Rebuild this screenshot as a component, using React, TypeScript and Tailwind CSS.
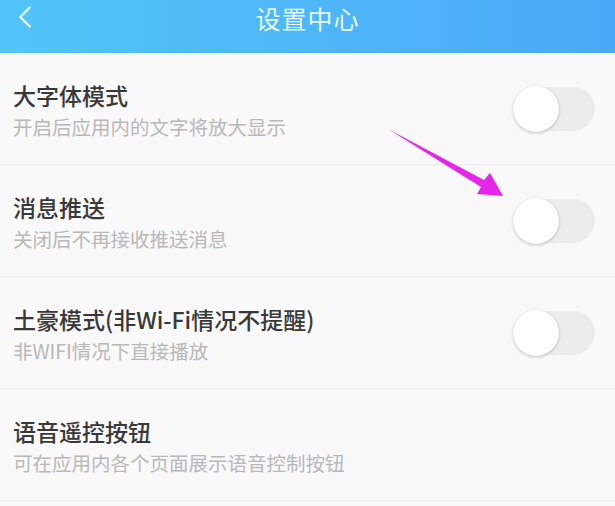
import { ChevronLeft } from "lucide-react";

const settings = [
  { title: "大字体模式", desc: "开启后应用内的文字将放大显示", toggle: true },
  { title: "消息推送", desc: "关闭后不再接收推送消息", toggle: true },
  { title: "土豪模式(非Wi-Fi情况不提醒)", desc: "非WIFI情况下直接播放", toggle: true },
  { title: "语音遥控按钮", desc: "可在应用内各个页面展示语音控制按钮", toggle: false },
];

const Toggle = () => (
  <div className="relative w-[82px] h-[44px] rounded-full bg-[#ececec]">
    <div className="absolute left-0 top-[-1px] w-[46px] h-[46px] rounded-full bg-white shadow-[0_1px_3px_rgba(0,0,0,0.25)]" />
  </div>
);

export default function App() {
  return (
    <div
      className="relative w-[615px] h-[506px] overflow-hidden bg-[#f9f9f9]"
      style={{ fontFamily: '"Noto Sans CJK SC", "Noto Sans", sans-serif' }}
    >
      {/* Header */}
      <div className="relative h-[53px] bg-gradient-to-r from-[#53c5f9] to-[#4aa9f6] flex items-center justify-center">
        <ChevronLeft
          className="absolute left-[6px] top-[-2px] w-[38px] h-[38px] text-[#eaf7ff]"
          strokeWidth={1.5}
        />
        <h1 className="text-[25px] leading-none text-[#eaf7ff] -mt-[17px] tracking-[1px]">
          设置中心
        </h1>
      </div>

      {/* Rows */}
      <div className="flex flex-col">
        {settings.map((s) => (
          <div
            key={s.title}
            className="h-[112px] flex items-center justify-between pl-[13px] pr-[20px] border-b border-[#efefef]"
          >
            <div className="flex flex-col pt-[2px]">
              <span className="text-[23px] leading-[30px] font-medium text-[#383838]">{s.title}</span>
              <span className="mt-[4px] text-[19.5px] leading-[26px] text-[#b8b8b8]">{s.desc}</span>
            </div>
            {s.toggle && <Toggle />}
          </div>
        ))}
      </div>

      {/* Annotation arrow */}
      <svg className="absolute left-0 top-0 pointer-events-none" width="615" height="506">
        <polygon
          points="388,129 484,180 490,173 503,196 477,194 481,187"
          fill="#e526e8"
        />
      </svg>
    </div>
  );
}
